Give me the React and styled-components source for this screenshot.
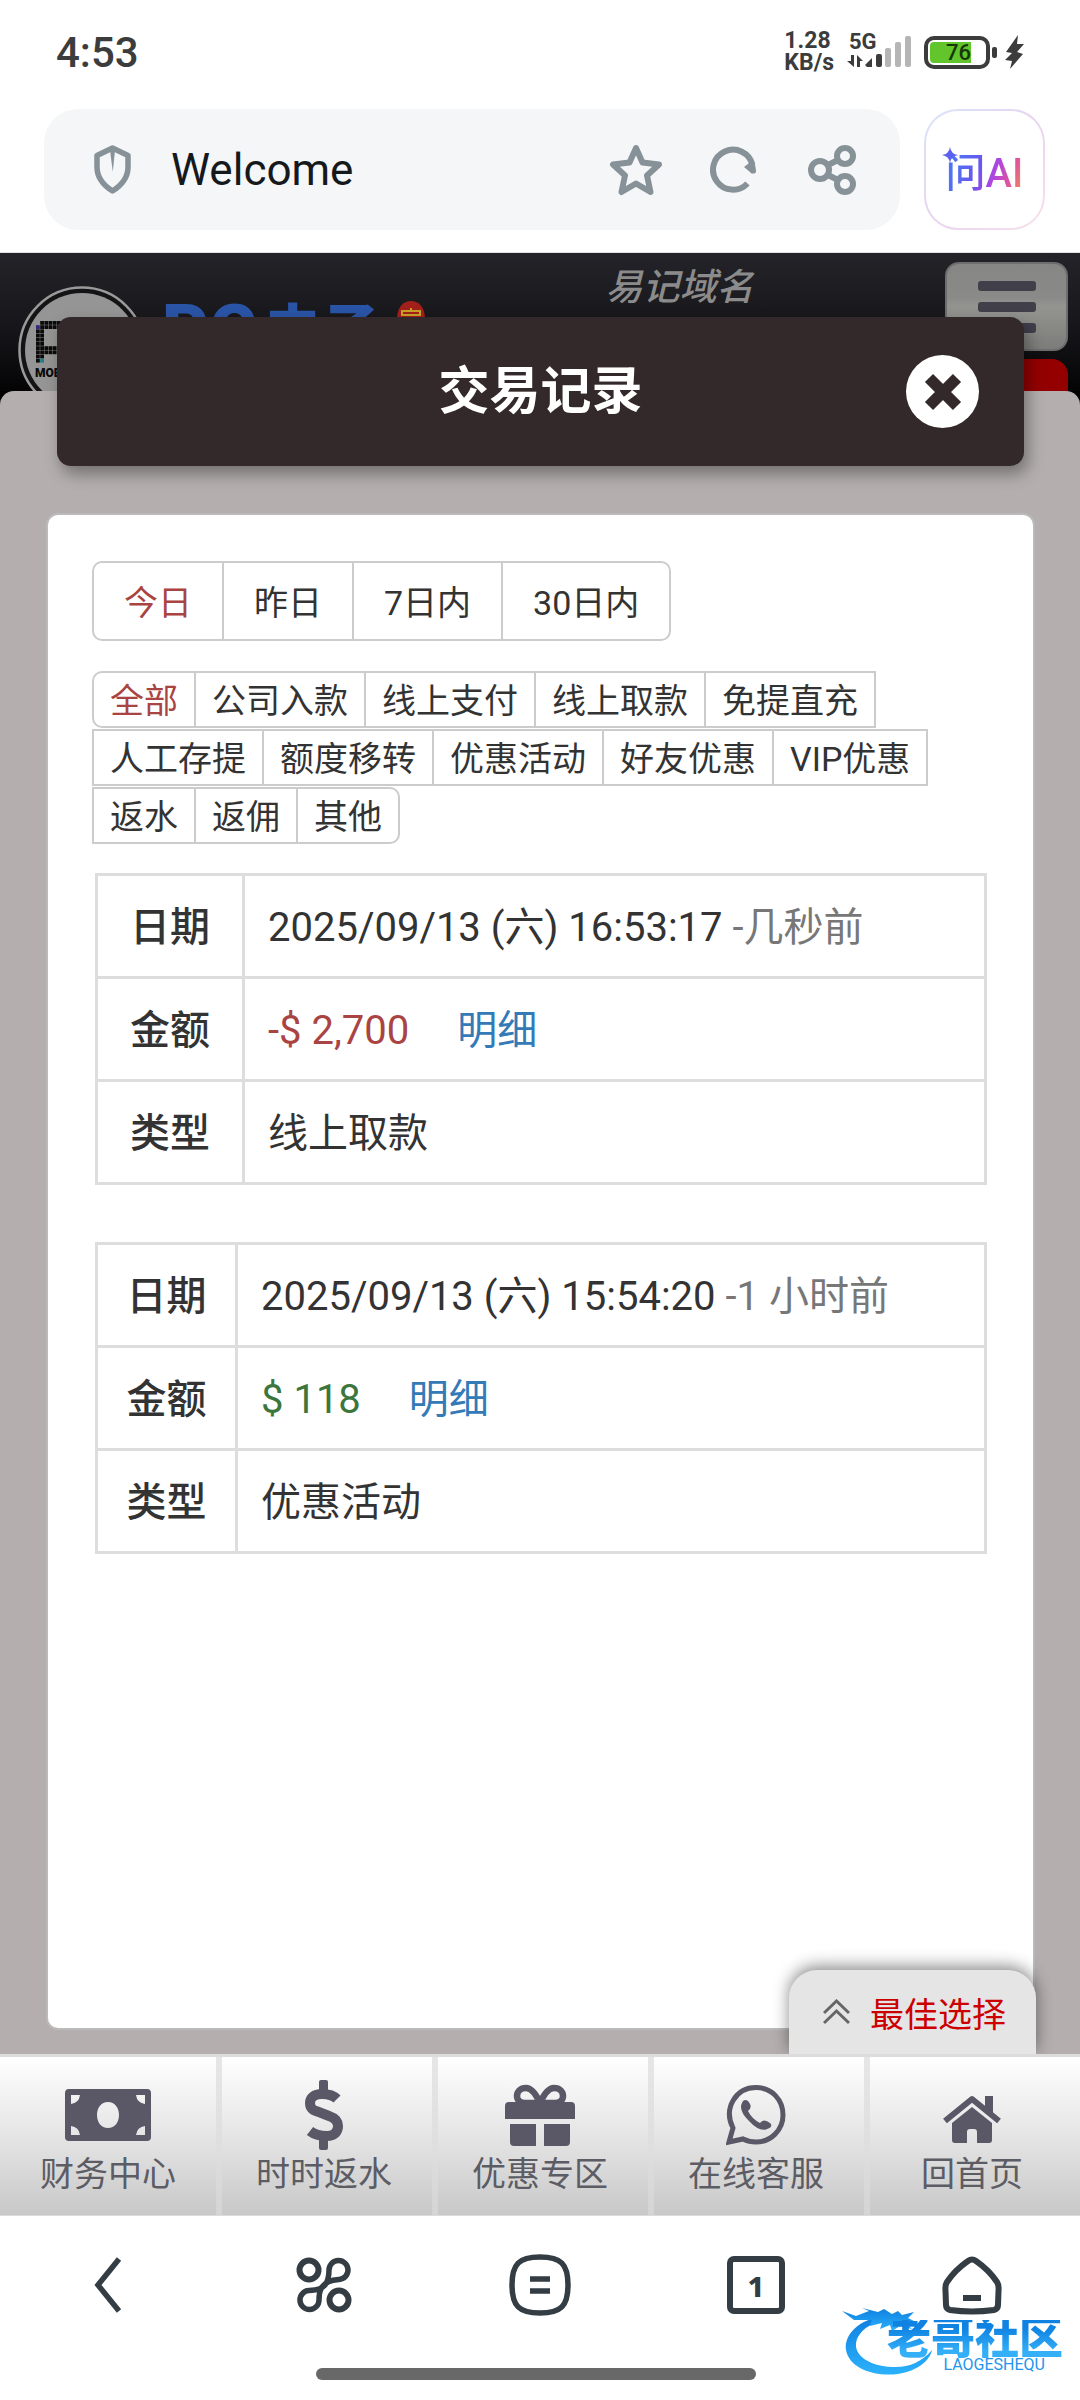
import React, { useState } from "react";
import styled, { createGlobalStyle, css } from "styled-components";

const GlobalStyle = createGlobalStyle`
  *, *::before, *::after { box-sizing: border-box; }
  body {
    margin: 0;
    background: #fff;
    color: #333;
    font-family: Roboto, "Noto Sans CJK SC", sans-serif;
    font-size: 40px;
  }
  button, input { font: inherit; color: inherit; }
  button { padding: 0; border: 0; background: none; cursor: pointer; }
  a { text-decoration: none; }
  svg { display: block; flex: none; }
`;

const Screen = styled.div`
  display: flex;
  flex-direction: column;
  min-height: 100vh;
  position: relative;
`;

/* ---------- phone status bar ---------- */

const StatusBar = styled.div`
  display: flex;
  align-items: center;
  justify-content: space-between;
  height: 104px;
  padding: 0 56px;
  color: #3c3c3c;
`;

const Clock = styled.time`
  font-size: 42px;
  font-weight: 500;
`;

const StatusIcons = styled.div`
  display: flex;
  align-items: center;
  gap: 12px;
`;

const NetSpeed = styled.div`
  display: flex;
  flex-direction: column;
  font-size: 23px;
  font-weight: 700;
  line-height: 22px;
`;

const Signal = styled.div`
  position: relative;
`;

const NetType = styled.span`
  position: absolute;
  top: -4px;
  left: 3px;
  font-size: 22px;
  font-weight: 700;
  line-height: 20px;
`;

const Power = styled.div`
  display: flex;
  align-items: center;
  gap: 8px;
`;

const Battery = styled.div`
  display: flex;
  align-items: center;
  gap: 2px;
  &::after {
    content: "";
    width: 5px;
    height: 11px;
    border-radius: 2px;
    background: #3c3c3c;
  }
`;

const BatteryBody = styled.div`
  width: 66px;
  height: 33px;
  padding: 2px;
  border: 4px solid #3c3c3c;
  border-radius: 10px;
`;

const BatteryFill = styled.div`
  display: flex;
  align-items: center;
  justify-content: flex-end;
  height: 100%;
  border-radius: 4px 0 0 4px;
  background: #62c52b;
  color: #14380a;
  font-size: 22px;
  font-weight: 500;
`;

/* ---------- browser address bar ---------- */

const AddressRow = styled.div`
  display: flex;
  gap: 24px;
  padding: 5px 35px 22px 44px;
  border-bottom: 1px solid #e4e4e4;
`;

const AddressBar = styled.div`
  display: flex;
  align-items: center;
  flex: 1;
  min-width: 0;
  height: 121px;
  padding: 0 40px 0 50px;
  border-radius: 34px;
  background: #f4f6f8;
  color: #869198;
`;

const AddressInput = styled.input`
  flex: 1;
  min-width: 0;
  padding: 0 40px;
  border: 0;
  outline: 0;
  background: none;
  color: #16191c;
  font-size: 44px;
`;

const AddressActions = styled.div`
  display: flex;
  gap: 42px;
`;

const IconButton = styled.button`
  display: flex;
  align-items: center;
  justify-content: center;
  min-width: 56px;
  height: 64px;
`;

const AiButton = styled.button`
  position: relative;
  flex: none;
  width: 121px;
  height: 121px;
  border: 2px solid transparent;
  border-radius: 34px;
  background:
    linear-gradient(#fff, #fff) padding-box,
    linear-gradient(135deg, #d8e4fa, #e8d4f0 50%, #f8e0ea) border-box;
`;

const AiText = styled.span`
  background: linear-gradient(110deg, #4f74f2 15%, #6a55ee 42%, #b445dc 62%, #e0559a 80%, #f29a45);
  background-clip: text;
  color: transparent;
  font-size: 40px;
  font-weight: 500;
`;

const Sparkle = styled.svg`
  position: absolute;
  top: 36px;
  left: 16px;
`;

/* ---------- web page ---------- */

const Page = styled.div`
  position: relative;
  display: grid;
  flex: 1;
  background: #000;
`;

const Backdrop = styled.div`
  grid-area: 1 / 1;
  display: flex;
  flex-direction: column;
  min-width: 0;
`;

const SiteHeader = styled.header`
  display: grid;
  grid-template-columns: auto 1fr auto;
  align-items: start;
  height: 138px;
  padding: 9px 12px 0 18px;
  overflow: hidden;
  background: linear-gradient(#232329, #16161a 55%, #040405);
`;

const Sheet = styled.div`
  flex: 1;
  border-radius: 14px 14px 0 0;
  background: #b4aeae;
`;

const Brand = styled.div`
  display: flex;
  align-items: flex-start;
  gap: 16px;
  padding-top: 24px;
`;

const BrandName = styled.div`
  display: flex;
  gap: 6px;
  padding-top: 10px;
  color: #2a54a6;
  font-weight: 900;
  line-height: 72px;
`;

const BrandLatin = styled.span`
  font-size: 72px;
`;

const BrandHan = styled.span`
  font-size: 58px;
`;

const Emblem = styled.svg`
  margin-top: 14px;
`;

const DomainLink = styled.a`
  justify-self: center;
  padding-right: 12px;
  color: #8b8b8b;
  font-size: 37px;
  font-style: italic;
  font-weight: 500;
  line-height: 52px;
`;

const HeaderActions = styled.div`
  display: flex;
  flex-direction: column;
  gap: 8px;
  width: 123px;
`;

const MenuButton = styled.button`
  display: flex;
  flex-direction: column;
  align-items: center;
  justify-content: center;
  gap: 11px;
  height: 89px;
  border: 2px solid #6d6d6d;
  border-radius: 14px;
  background: linear-gradient(#868685, #8a8a89 40%, #94948f 50%, #7c7c7b);
`;

const MenuLine = styled.span`
  width: 58px;
  height: 10px;
  border-radius: 3px;
  background: #403f4a;
`;

const RedButton = styled.button`
  height: 60px;
  border-radius: 16px;
  background: #940000;
`;

/* ---------- dialog ---------- */

const Dialog = styled.section`
  grid-area: 1 / 1;
  display: flex;
  flex-direction: column;
  gap: 49px;
  min-width: 0;
  padding: 64px 47px 26px 48px;
  z-index: 1;
`;

const DialogHeader = styled.header`
  display: grid;
  grid-template-columns: 1fr auto 1fr;
  align-items: center;
  height: 149px;
  margin: 0 9px;
  padding: 0 45px;
  border-radius: 14px;
  background: #33282a;
  box-shadow: 4px 8px 16px rgba(0, 0, 0, 0.35);
`;

const DialogTitle = styled.h1`
  grid-column: 2;
  margin: 0;
  color: #fff;
  font-size: 51px;
  font-weight: 700;
  line-height: 60px;
`;

const CloseButton = styled.button`
  display: flex;
  align-items: center;
  justify-content: center;
  justify-self: end;
  width: 73px;
  height: 73px;
  border-radius: 50%;
  background: #fff;
`;

const Panel = styled.div`
  flex: 1;
  padding: 46px 43px 46px 44px;
  border-radius: 10px;
  background: #fff;
  box-shadow: 0 0 0 2px #bababa;
`;

const segment = css`
  border: 2px solid #ccc;
  background: #fff;
  color: ${(p) => (p.$active ? "#a94442" : "#333")};
  font-size: 34px;
  & + & { margin-left: -2px; }
`;

const DateTabs = styled.div`
  display: flex;
  margin-bottom: 30px;
`;

const DateTab = styled.button`
  ${segment}
  height: 80px;
  padding: 0 30px 2px;
  &:first-child { border-radius: 10px 0 0 10px; }
  &:last-child { border-radius: 0 10px 10px 0; }
`;

const TypeTabs = styled.div`
  display: flex;
  flex-direction: column;
  gap: 1px;
  margin-bottom: 29px;
`;

const TypeRow = styled.div`
  display: flex;
  &:first-child > :first-child { border-radius: 10px 0 0 10px; }
  &:last-child > :last-child { border-radius: 0 10px 10px 0; }
`;

const TypeTab = styled.button`
  ${segment}
  height: 57px;
  padding: 0 16px 2px;
`;

const RecordTable = styled.table`
  width: calc(100% - 6px);
  margin: 0 3px 57px;
  border-collapse: collapse;
  line-height: 48px;
  th, td { height: 103px; border: 3px solid #ddd; }
  th {
    width: ${(p) => p.$labelWidth}px;
    padding: 3px 0 0;
    font-weight: 500;
  }
  td { padding: 3px 23px 0; }
`;

const Ago = styled.span`
  color: #777;
`;

const Amount = styled.span`
  margin-right: 48px;
  color: ${(p) => (p.$negative ? "#a94442" : "#3c763d")};
`;

const DetailLink = styled.a`
  color: #337ab7;
`;

const BestChoice = styled.button`
  position: absolute;
  right: 44px;
  bottom: 0;
  z-index: 2;
  display: flex;
  align-items: center;
  gap: 20px;
  height: 84px;
  padding: 0 30px 0 34px;
  border-radius: 28px 28px 0 0;
  background: #e5e5e5;
  box-shadow: 0 -4px 16px rgba(0, 0, 0, 0.45);
  color: #c00;
  font-size: 34px;
  clip-path: inset(-40px -40px 0 -40px);
`;

/* ---------- bottom bars ---------- */

const SiteNav = styled.nav`
  display: grid;
  grid-template-columns: repeat(5, 1fr);
  height: 162px;
  border-top: 3px solid #dcdcdc;
  border-bottom: 1px solid #dcdcdc;
  background: linear-gradient(#fff, #e2e2e2 55%, #c8c8c8);
`;

const SiteNavItem = styled.a`
  display: flex;
  flex-direction: column;
  align-items: center;
  padding-top: 22px;
  color: #5c5c64;
  font-size: 34px;
  line-height: 46px;
  & + & {
    padding-right: 6px;
    border-left: 6px solid;
    border-image: linear-gradient(#e6e6e6, #dedede 60%, #d4d4d4) 1;
  }
`;

const NavIcon = styled.span`
  display: flex;
  align-items: center;
  height: 72px;
  color: #5a5866;
`;

const BrowserNav = styled.nav`
  display: grid;
  grid-template-columns: repeat(5, 1fr);
  align-items: center;
  height: 138px;
  color: #333d43;
`;

const TabCount = styled.span`
  display: flex;
  align-items: center;
  justify-content: center;
  width: 58px;
  height: 58px;
  border: 6px solid #333d43;
  border-radius: 7px;
  font-family: "Noto Sans", sans-serif;
  font-size: 29px;
  font-weight: 800;
`;

const GestureArea = styled.div`
  display: flex;
  justify-content: center;
  height: 46px;
  padding: 14px 8px 0 0;
`;

const GestureBar = styled.div`
  width: 41%;
  height: 12px;
  border-radius: 6px;
  background: #686868;
`;

const Watermark = styled.div`
  position: absolute;
  right: 17px;
  bottom: 28px;
  display: flex;
  flex-direction: column;
  align-items: flex-end;
  width: 221px;
  padding-top: 14px;
  color: #2196ec;
`;

const WatermarkSwirl = styled.svg`
  position: absolute;
  top: 0;
  left: 0;
`;

const WatermarkName = styled.span`
  position: relative;
  background: linear-gradient(#0f82e2 20%, #35b0f8 85%);
  background-clip: text;
  color: transparent;
  font-size: 44px;
  font-weight: 900;
  line-height: 38px;
`;

const WatermarkLatin = styled.span`
  position: relative;
  padding-right: 18px;
  font-size: 16px;
  line-height: 14px;
`;

/* ---------- drawings ---------- */

const ShieldIcon = () => (
  <svg width="37" height="49" viewBox="0 0 37 49" aria-hidden="true">
    <path d="M18.5 3 L34 10.5 V22 C34 33 28 40 18.5 46 C9 40 3 33 3 22 V10.5 Z" fill="none" stroke="currentColor" strokeWidth="5.5" strokeLinejoin="round" />
    <path d="M16 5 H21 L18.8 27 Z" fill="currentColor" />
  </svg>
);

const StarIcon = () => (
  <svg width="54" height="52" viewBox="0 0 54 52" aria-hidden="true">
    <path d="M27 4 L33.5 18.5 L50 20.5 L38 31.5 L41.5 48 L27 39.5 L12.5 48 L16 31.5 L4 20.5 L20.5 18.5 Z" fill="none" stroke="currentColor" strokeWidth="6" strokeLinejoin="round" />
  </svg>
);

const RefreshIcon = () => (
  <svg width="48" height="48" viewBox="0 0 48 48" aria-hidden="true">
    <path d="M37.5 37.5 A20 20 0 1 1 42.5 19" fill="none" stroke="currentColor" strokeWidth="6" />
    <path d="M34 21 L43 14 C45 18 46 22 46 26 C45 28 41 28 40 26 Z" fill="currentColor" />
  </svg>
);

const ShareIcon = () => (
  <svg width="48" height="50" viewBox="0 0 48 50" fill="none" stroke="currentColor" strokeWidth="6" aria-hidden="true">
    <circle cx="12" cy="25" r="9" />
    <circle cx="37" cy="11" r="8" />
    <circle cx="37" cy="39" r="8" />
    <path d="M20 20 L30 15 M20 30 L30 35" />
  </svg>
);

const SignalIcon = () => (
  <svg width="66" height="32" viewBox="0 0 66 32" aria-hidden="true">
    <g fill="#3c3c3c">
      <path d="M5 19 H8 V31 L1 25 H5 Z M11 31 V19 L17 25 H14 V31 Z" />
      <path d="M19 29 L26 22 V31 H21 Z" />
      <rect x="30" y="18" width="6" height="13" rx="2" />
    </g>
    <g fill="#b5b5b5">
      <rect x="39" y="12" width="6" height="19" rx="2" />
      <rect x="49" y="6" width="6" height="25" rx="2" />
      <rect x="59" y="0" width="6" height="31" rx="2" />
    </g>
  </svg>
);

const BoltIcon = () => (
  <svg width="19" height="34" viewBox="0 0 19 34" fill="#3c3c3c" aria-hidden="true">
    <path d="M13 0 L1 17 L7 18 L0 25 L7 26 L5 34 L18 19 L12 17 L19 9 L12 9 Z" />
  </svg>
);

const pixelCells = [];
for (let row = 0; row < 10; row += 1) {
  for (let col = 0; col < 9; col += 1) {
    const stem = col < 2 && !(row === 0 && col === 0);
    const bar = row < 2 || row === 6 || row === 7;
    if (stem || (bar && col > 1)) pixelCells.push([row, col]);
  }
}

const cellColor = (row, col) => {
  if (row === 1 && col === 0) return "#33267a";
  if (row === 9 && col === 1) return "#1f7f86";
  return "#0a0a0a";
};

const LogoIcon = () => (
  <svg width="128" height="128" viewBox="0 0 128 128" role="img" aria-label="PG">
    <circle cx="64" cy="64" r="62.5" fill="#141416" stroke="#9a9a9a" strokeWidth="2.5" />
    <circle cx="64" cy="64" r="57" fill="#959595" />
    {pixelCells.map(([row, col]) => (
      <rect key={`${row}-${col}`} x={18 + col * 4.2} y={35 + row * 4.2} width="3.8" height="3.8" fill={cellColor(row, col)} />
    ))}
    <text x="17" y="91" fontFamily="Roboto, sans-serif" fontSize="12" fontWeight="900" fill="#0a0a0a">MOBILE</text>
  </svg>
);

const EmblemIcon = () => (
  <Emblem width="30" height="34" viewBox="0 0 30 34" aria-hidden="true">
    <path d="M1 20 C1 7 7 1 15 1 C23 1 29 7 29 20 V34 H1 Z" fill="#a3201a" />
    <path d="M6 11 H24 V15 H6 Z M15 8 V11" fill="none" stroke="#c9a227" strokeWidth="2" />
  </Emblem>
);

const CrossIcon = () => (
  <svg width="42" height="42" viewBox="0 0 42 42" aria-hidden="true">
    <path d="M7 7 L35 35 M35 7 L7 35" stroke="#33282a" strokeWidth="11.5" />
  </svg>
);

const ChevronsIcon = () => (
  <svg width="27" height="26" viewBox="0 0 27 26" fill="none" stroke="#666" strokeWidth="3" aria-hidden="true">
    <path d="M1 14 L13.5 2 L26 14 M1 24 L13.5 12 L26 24" />
  </svg>
);

const MoneyIcon = () => (
  <svg width="86" height="52" viewBox="0 0 86 52" aria-hidden="true">
    <path
      fill="currentColor"
      fillRule="evenodd"
      d="M4 0 H82 Q86 0 86 4 V48 Q86 52 82 52 H4 Q0 52 0 48 V4 Q0 0 4 0 Z M6 6 V15 Q14 14 15 6 Z M80 6 V15 Q72 14 71 6 Z M6 46 V37 Q14 38 15 46 Z M80 46 V37 Q72 38 71 46 Z M43 13 C36 13 32 19 32 26 C32 33 36 39 43 39 C50 39 54 33 54 26 C54 19 50 13 43 13 Z"
    />
  </svg>
);

const DollarIcon = () => (
  <svg width="40" height="70" viewBox="0 0 40 70" aria-hidden="true">
    <path d="M33 19 C28 14 22 14 18 14 C10 14 6 18 6 23 C6 29 10 31 15 32 L25 36 C31 38 34 41 34 46 C34 52 30 56 23 56 C17 56 11 55 6 51" fill="none" stroke="currentColor" strokeWidth="10" />
    <path d="M15 2 Q15 0 17 0 H22 Q24 0 24 2 V14 H15 Z M15 56 H24 V68 Q24 70 22 70 H17 Q15 70 15 68 Z" fill="currentColor" />
  </svg>
);

const GiftIcon = () => (
  <svg width="70" height="62" viewBox="0 0 70 62" aria-hidden="true">
    <path d="M35 19 C30 8 26 4 21 4 C15 4 12 8 12 12 C12 16 15 19 20 19 Z M35 19 C40 8 44 4 49 4 C55 4 58 8 58 12 C58 16 55 19 50 19 Z" fill="none" stroke="currentColor" strokeWidth="6.5" />
    <path fill="currentColor" d="M4 18 H66 Q70 18 70 22 V35 H0 V22 Q0 18 4 18 Z M5 40 H31 V62 H9 Q5 62 5 58 Z M39 40 H65 V58 Q65 62 61 62 H39 Z" />
  </svg>
);

const ChatIcon = () => (
  <svg width="60" height="62" viewBox="0 0 60 62" aria-hidden="true">
    <path d="M3 58 L7 44 C-3 24 10 3.500 30 3.500 C46 3.500 57 16 57 31 C57 46 45 58 30 58 C25 58 21 57 17 55 Z" fill="none" stroke="currentColor" strokeWidth="5" />
    <path d="M17 17 Q21 14 24 20 Q26 24 22 27 Q26 35 34 39 Q38 34 44 39 Q48 43 40 45.500 Q32 47 23 37 Q13 27 15.500 20 Z" fill="currentColor" />
  </svg>
);

const HouseIcon = () => (
  <svg width="60" height="56" viewBox="0 -8 60 56" aria-hidden="true">
    <path d="M3 26 L30 4 L57 26" fill="none" stroke="currentColor" strokeWidth="6" strokeLinejoin="round" />
    <path d="M43 1 H51 V19 L43 12 Z" fill="currentColor" />
    <path d="M30 12 L50 28 V45 Q50 48 47 48 H35 V37 Q35 34 32 34 H28 Q25 34 25 37 V48 H13 Q10 48 10 45 V28 Z" fill="currentColor" />
  </svg>
);

const BackIcon = () => (
  <svg width="28" height="56" viewBox="0 0 28 56" aria-hidden="true">
    <path d="M25 2 L4 28 L25 54" fill="none" stroke="currentColor" strokeWidth="5.500" />
  </svg>
);

const CloverIcon = () => (
  <svg width="56" height="56" viewBox="0 0 56 56" fill="none" stroke="currentColor" strokeWidth="6" aria-hidden="true">
    <circle cx="13" cy="13" r="9.500" />
    <circle cx="43" cy="43" r="9.500" />
    <path d="M33 13 A9.500 9.500 0 1 1 43 22.500 C33 23 30 26 27 29 C24 32 23 36 23 43 A9.500 9.500 0 1 1 13 33.500 C23 33 26 31 29 28 C32 24 33 20 33 13 Z" strokeWidth="5.500" />
  </svg>
);

const MenuIcon = () => (
  <svg width="62" height="62" viewBox="0 0 62 62" fill="none" stroke="currentColor" strokeWidth="5.500" aria-hidden="true">
    <path d="M31 3 C52 3 59 10 59 31 C59 52 52 59 31 59 C10 59 3 52 3 31 C3 10 10 3 31 3 Z" />
    <path d="M21 25 H41 M21 37 H41" />
  </svg>
);

const HomeIcon = () => (
  <svg width="60" height="60" viewBox="0 0 60 60" fill="none" stroke="currentColor" strokeWidth="6" aria-hidden="true">
    <path d="M26 6 Q30 3 34 6 Q47 15 55 27 Q57 30 56.500 36 L56 50 Q56 54 52 55 Q30 58 8 55 Q4 54 4 50 L3.500 36 Q3 30 5 27 Q13 15 26 6 Z" />
    <path d="M21 43 H39" />
  </svg>
);

const SwirlIcon = () => (
  <WatermarkSwirl width="94" height="72" viewBox="0 0 94 72" aria-hidden="true">
    <defs>
      <linearGradient id="swirl" x1="0" y1="0" x2="0" y2="1">
        <stop offset="0" stopColor="#0f7fe0" />
        <stop offset="1" stopColor="#2bb2fb" />
      </linearGradient>
    </defs>
    <g fill="url(#swirl)">
      <path d="M36 11 C14 16 2 30 4 44 C7 62 32 71 56 68 C76 65 88 54 90 44 C80 56 66 62 50 61 C28 60 13 50 14 38 C15 27 26 18 40 15 Z" />
      <path d="M0 5 L14 10 L27 5 L20 2 L36 6 L42 3 L50 8 L56 5 L60 9 L72 6 L66 12 L74 16 L64 17 L70 23 L58 20 L50 25 L48 19 L38 23 L40 17 L28 20 L30 14 L12 14 Z" />
    </g>
  </WatermarkSwirl>
);

/* ---------- data ---------- */

const dateRanges = ["今日", "昨日", "7日内", "30日内"];

const typeRows = [
  ["全部", "公司入款", "线上支付", "线上取款", "免提直充"],
  ["人工存提", "额度移转", "优惠活动", "好友优惠", "VIP优惠"],
  ["返水", "返佣", "其他"],
];

const records = [
  { date: "2025/09/13 (六) 16:53:17", ago: "几秒前", amount: "-$ 2,700", negative: true, type: "线上取款", labelWidth: 147 },
  { date: "2025/09/13 (六) 15:54:20", ago: "1 小时前", amount: "$ 118", negative: false, type: "优惠活动", labelWidth: 140 },
];

const siteLinks = [
  { label: "财务中心", icon: <MoneyIcon /> },
  { label: "时时返水", icon: <DollarIcon /> },
  { label: "优惠专区", icon: <GiftIcon /> },
  { label: "在线客服", icon: <ChatIcon /> },
  { label: "回首页", icon: <HouseIcon /> },
];

export default function App() {
  const [range, setRange] = useState("今日");
  const [type, setType] = useState("全部");

  return (
    <>
      <GlobalStyle />
      <Screen>
        <StatusBar>
          <Clock>4:53</Clock>
          <StatusIcons>
            <NetSpeed>
              <span>1.28</span>
              <span>KB/s</span>
            </NetSpeed>
            <Signal>
              <NetType>5G</NetType>
              <SignalIcon />
            </Signal>
            <Power>
              <Battery>
                <BatteryBody>
                  <BatteryFill style={{ width: "76%" }}>76</BatteryFill>
                </BatteryBody>
              </Battery>
              <BoltIcon />
            </Power>
          </StatusIcons>
        </StatusBar>

        <AddressRow>
          <AddressBar>
            <ShieldIcon />
            <AddressInput aria-label="地址栏" defaultValue="Welcome" />
            <AddressActions>
              <IconButton aria-label="收藏"><StarIcon /></IconButton>
              <IconButton aria-label="刷新"><RefreshIcon /></IconButton>
              <IconButton aria-label="分享"><ShareIcon /></IconButton>
            </AddressActions>
          </AddressBar>
          <AiButton>
            <Sparkle width="16" height="16" viewBox="0 0 16 16" aria-hidden="true">
              <path d="M8 0 Q9 7 16 8 Q9 9 8 16 Q7 9 0 8 Q7 7 8 0 Z" fill="#5b62f0" />
            </Sparkle>
            <AiText>问AI</AiText>
          </AiButton>
        </AddressRow>

        <Page>
          <Backdrop>
            <SiteHeader>
              <Brand>
                <LogoIcon />
                <BrandName>
                  <BrandLatin>PG</BrandLatin>
                  <BrandHan>电子</BrandHan>
                </BrandName>
                <EmblemIcon />
              </Brand>
              <DomainLink href="#domain">易记域名</DomainLink>
              <HeaderActions>
                <MenuButton aria-label="菜单">
                  <MenuLine />
                  <MenuLine />
                  <MenuLine />
                </MenuButton>
                <RedButton aria-label="账户" />
              </HeaderActions>
            </SiteHeader>
            <Sheet />
          </Backdrop>

          <Dialog role="dialog" aria-labelledby="dialog-title">
            <DialogHeader>
              <DialogTitle id="dialog-title">交易记录</DialogTitle>
              <CloseButton aria-label="关闭"><CrossIcon /></CloseButton>
            </DialogHeader>
            <Panel>
              <DateTabs>
                {dateRanges.map((label) => (
                  <DateTab key={label} $active={label === range} onClick={() => setRange(label)}>{label}</DateTab>
                ))}
              </DateTabs>
              <TypeTabs>
                {typeRows.map((row) => (
                  <TypeRow key={row[0]}>
                    {row.map((label) => (
                      <TypeTab key={label} $active={label === type} onClick={() => setType(label)}>{label}</TypeTab>
                    ))}
                  </TypeRow>
                ))}
              </TypeTabs>
              {records.map((r) => (
                <RecordTable key={r.date} $labelWidth={r.labelWidth}>
                  <tbody>
                    <tr>
                      <th scope="row">日期</th>
                      <td>{r.date} <Ago>-{r.ago}</Ago></td>
                    </tr>
                    <tr>
                      <th scope="row">金额</th>
                      <td>
                        <Amount $negative={r.negative}>{r.amount}</Amount>
                        <DetailLink href="#detail">明细</DetailLink>
                      </td>
                    </tr>
                    <tr>
                      <th scope="row">类型</th>
                      <td>{r.type}</td>
                    </tr>
                  </tbody>
                </RecordTable>
              ))}
            </Panel>
          </Dialog>

          <BestChoice>
            <ChevronsIcon />
            最佳选择
          </BestChoice>
        </Page>

        <SiteNav>
          {siteLinks.map((item) => (
            <SiteNavItem key={item.label} href="#nav">
              <NavIcon>{item.icon}</NavIcon>
              {item.label}
            </SiteNavItem>
          ))}
        </SiteNav>

        <BrowserNav>
          <IconButton aria-label="返回"><BackIcon /></IconButton>
          <IconButton aria-label="工具"><CloverIcon /></IconButton>
          <IconButton aria-label="更多"><MenuIcon /></IconButton>
          <IconButton aria-label="标签页"><TabCount>1</TabCount></IconButton>
          <IconButton aria-label="主页"><HomeIcon /></IconButton>
        </BrowserNav>
        <GestureArea><GestureBar /></GestureArea>

        <Watermark>
          <SwirlIcon />
          <WatermarkName>老哥社区</WatermarkName>
          <WatermarkLatin>LAOGESHEQU</WatermarkLatin>
        </Watermark>
      </Screen>
    </>
  );
}
